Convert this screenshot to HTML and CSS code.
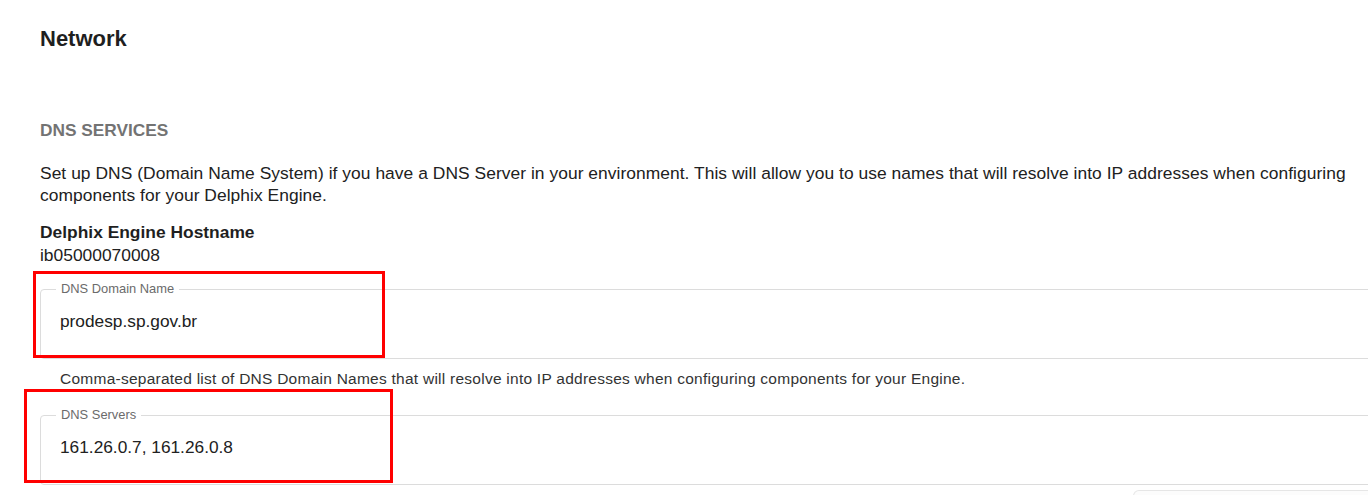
FILE: index.html
```html
<!DOCTYPE html>
<html>
<head>
<meta charset="utf-8">
<link rel="stylesheet" href="styles.css">
</head>
<body>
<main class="page">
  <h1 class="title">Network</h1>
  <h2 class="section">DNS SERVICES</h2>
  <p class="desc">Set up DNS (Domain Name System) if you have a DNS Server in your environment. This will allow you to use names that will resolve into IP addresses when configuring components for your Delphix Engine.</p>
  <div class="host">
    <div class="host-label">Delphix Engine Hostname</div>
    <div class="host-value">ib05000070008</div>
  </div>
  <div class="field field-first">
    <span class="field-label">DNS Domain Name</span>
    <div class="field-value">prodesp.sp.gov.br</div>
    <span class="mark mark-one"></span>
  </div>
  <div class="helper">Comma-separated list of DNS Domain Names that will resolve into IP addresses when configuring components for your Engine.</div>
  <div class="field field-second">
    <span class="field-label">DNS Servers</span>
    <div class="field-value">161.26.0.7, 161.26.0.8</div>
    <span class="mark mark-two"></span>
  </div>
  <div class="footer">
    <div class="footer-box"></div>
  </div>
</main>
</body>
</html>
```
FILE: styles.css
```css
html, body {
  margin: 0;
  padding: 0;
  background: #ffffff;
  overflow: hidden;
}
body {
  font-family: "Liberation Sans", Arial, sans-serif;
  color: #212121;
}
.page {
  padding: 27px 0 0 40px;
  width: 1340px;
}
.title {
  margin: 0;
  font-size: 22px;
  line-height: 24px;
  font-weight: bold;
  color: #1f1f1f;
}
.section {
  margin: 69px 0 0;
  font-size: 17.3px;
  line-height: 20px;
  font-weight: bold;
  color: #737373;
}
.desc {
  margin: 22px 0 0;
  font-size: 17.4px;
  letter-spacing: 0.05px;
  line-height: 22px;
  color: #212121;
}
.host {
  margin-top: 15px;
  font-size: 17.4px;
  line-height: 22px;
}
.host-label {
  font-weight: bold;
  color: #1f1f1f;
}
.host-value {
  margin-top: 1px;
  color: #212121;
}
.field {
  position: relative;
  border: 1px solid #dcdcdc;
  border-radius: 4px;
  height: 70px;
  box-sizing: border-box;
  width: 1340px;
}
.field-first {
  margin-top: 23px;
}
.field-second {
  margin-top: 27px;
}
.field-label {
  position: absolute;
  left: 15px;
  top: -8px;
  padding: 0 5px;
  background: #ffffff;
  font-size: 12.9px;
  line-height: 14px;
  color: #6b6b6b;
}
.field-value {
  padding: 21px 0 0 19px;
  font-size: 17.3px;
  line-height: 20px;
  color: #212121;
}
.helper {
  margin: 11px 0 0 20px;
  font-size: 15.5px;
  letter-spacing: 0.25px;
  line-height: 18px;
  color: #333333;
}
.mark {
  position: absolute;
  border: 3px solid #ff0000;
  box-sizing: border-box;
}
.mark-one {
  left: -8px;
  top: -19px;
  width: 352px;
  height: 87px;
}
.mark-two {
  left: -17px;
  top: -27px;
  width: 369px;
  height: 94px;
}
.footer {
  display: flex;
  justify-content: flex-end;
  margin-top: 5px;
}
.footer-box {
  width: 245px;
  height: 5px;
  border: 1px solid #e6e6e6;
  border-bottom: none;
  border-radius: 6px 6px 0 0;
  background: #fcfcfc;
}
```
